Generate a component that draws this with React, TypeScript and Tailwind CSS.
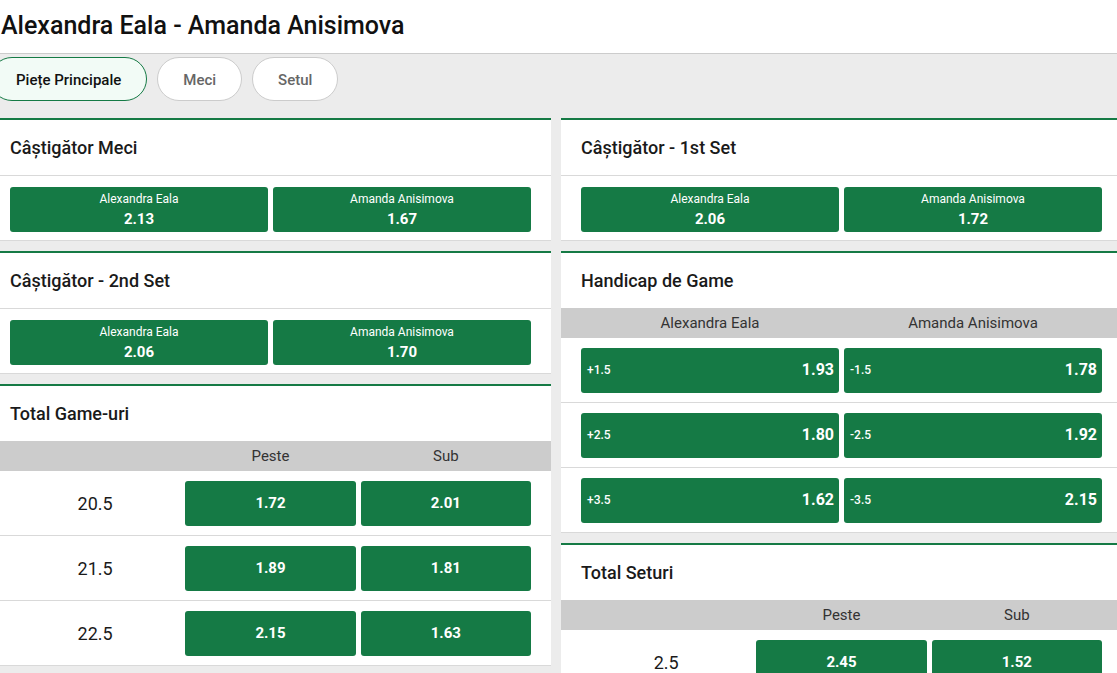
import React from "react";

const GREEN = "bg-[#157a45]";

type Pair = { name: string; odd: string };

function CardHeader({ title, bordered }: { title: string; bordered?: boolean }) {
  return (
    <div
      className={
        "h-[55px] px-[20px] flex items-center text-[18px] font-medium text-[#1a1a1a] box-content " +
        (bordered ? "border-b border-[#d9d9d9]" : "")
      }
    >
      {title}
    </div>
  );
}

function WinnerCard({ title, items }: { title: string; items: Pair[] }) {
  return (
    <div className="bg-white border-t-2 border-[#157a45]">
      <CardHeader title={title} bordered />
      <div className="px-[20px] pt-[11px] pb-[8px] flex gap-[5px] border-b border-[#d9d9d9]">
        {items.map((it) => (
          <button
            key={it.name}
            className={`flex-1 h-[45px] rounded-[3px] ${GREEN} text-white flex flex-col items-center justify-center pt-[1px]`}
          >
            <span className="text-[12px] leading-[16px]">{it.name}</span>
            <span className="text-[15px] leading-[20px] font-bold mt-[2px]">{it.odd}</span>
          </button>
        ))}
      </div>
    </div>
  );
}

function ColumnHeader({ cols, three }: { cols: string[]; three?: boolean }) {
  return (
    <div
      className={
        "h-[30px] pt-[1px] bg-[#cccccc] px-[20px] grid gap-[5px] items-center text-[15px] text-[#333]" +
        (three ? " grid-cols-3" : " grid-cols-2")
      }
    >
      {cols.map((c, i) => (
        <div key={i} className="text-center">
          {c}
        </div>
      ))}
    </div>
  );
}

function TotalsCard({ title, rows }: { title: string; rows: [string, string, string][] }) {
  return (
    <div className="bg-white border-t-2 border-[#157a45]">
      <CardHeader title={title} />
      <ColumnHeader cols={["", "Peste", "Sub"]} three />
      {rows.map(([line, over, under]) => (
        <div
          key={line}
          className="h-[65px] px-[20px] grid grid-cols-3 gap-[5px] items-center border-b border-[#d9d9d9]"
        >
          <div className="text-center text-[18px] text-[#1a1a1a]">{line}</div>
          <button className={`h-[45px] rounded-[3px] ${GREEN} text-white text-[15px] font-bold`}>
            {over}
          </button>
          <button className={`h-[45px] rounded-[3px] ${GREEN} text-white text-[15px] font-bold`}>
            {under}
          </button>
        </div>
      ))}
    </div>
  );
}

function HandicapCard() {
  const rows: [string, string, string, string][] = [
    ["+1.5", "1.93", "-1.5", "1.78"],
    ["+2.5", "1.80", "-2.5", "1.92"],
    ["+3.5", "1.62", "-3.5", "2.15"],
  ];
  return (
    <div className="bg-white border-t-2 border-[#157a45]">
      <CardHeader title="Handicap de Game" />
      <ColumnHeader cols={["Alexandra Eala", "Amanda Anisimova"]} />
      {rows.map(([h1, o1, h2, o2]) => (
        <div
          key={h1}
          className="h-[65px] px-[20px] grid grid-cols-2 gap-[5px] items-center border-b border-[#d9d9d9]"
        >
          {[
            [h1, o1],
            [h2, o2],
          ].map(([h, o]) => (
            <button
              key={h}
              className={`h-[45px] rounded-[3px] ${GREEN} text-white flex items-center justify-between pl-[6px] pr-[5px]`}
            >
              <span className="text-[12px] font-medium">{h}</span>
              <span className="text-[16px] font-bold">{o}</span>
            </button>
          ))}
        </div>
      ))}
    </div>
  );
}

export default function App() {
  return (
    <div
      className="w-[1117px] h-[673px] overflow-hidden bg-[#ececec]"
      style={{ fontFamily: "Roboto, 'Liberation Sans', Arial, sans-serif" }}
    >
      <div className="-ml-[10px] w-[1132px]">
        {/* Event title */}
        <div className="h-[51px] pb-[2px] bg-white border-b border-[#cccccc] box-content pl-[11px] flex items-center">
          <h1 className="text-[25px] font-medium text-[#111] leading-none">
            Alexandra Eala - Amanda Anisimova
          </h1>
        </div>

        {/* Market tabs */}
        <div className="flex gap-[10px] pt-[3px] pb-[17px]">
          <button className="h-[44px] pt-[2px] px-[25px] rounded-full border border-[#157a45] bg-[#f2fbf6] text-[15px] font-medium text-[#111]">
            Piețe Principale
          </button>
          <button className="h-[44px] pt-[2px] px-[25px] rounded-full border border-[#cccccc] bg-white text-[15px] font-medium text-[#666]">
            Meci
          </button>
          <button className="h-[44px] pt-[2px] px-[25px] rounded-full border border-[#cccccc] bg-white text-[15px] font-medium text-[#666]">
            Setul
          </button>
        </div>

        {/* Markets */}
        <div className="grid grid-cols-2 gap-x-[10px] items-start">
          <div className="flex flex-col gap-[10px]">
            <WinnerCard
              title="Câștigător Meci"
              items={[
                { name: "Alexandra Eala", odd: "2.13" },
                { name: "Amanda Anisimova", odd: "1.67" },
              ]}
            />
            <WinnerCard
              title="Câștigător - 2nd Set"
              items={[
                { name: "Alexandra Eala", odd: "2.06" },
                { name: "Amanda Anisimova", odd: "1.70" },
              ]}
            />
            <TotalsCard
              title="Total Game-uri"
              rows={[
                ["20.5", "1.72", "2.01"],
                ["21.5", "1.89", "1.81"],
                ["22.5", "2.15", "1.63"],
              ]}
            />
          </div>
          <div className="flex flex-col gap-[10px]">
            <WinnerCard
              title="Câștigător - 1st Set"
              items={[
                { name: "Alexandra Eala", odd: "2.06" },
                { name: "Amanda Anisimova", odd: "1.72" },
              ]}
            />
            <HandicapCard />
            <TotalsCard title="Total Seturi" rows={[["2.5", "2.45", "1.52"]]} />
          </div>
        </div>
      </div>
    </div>
  );
}
